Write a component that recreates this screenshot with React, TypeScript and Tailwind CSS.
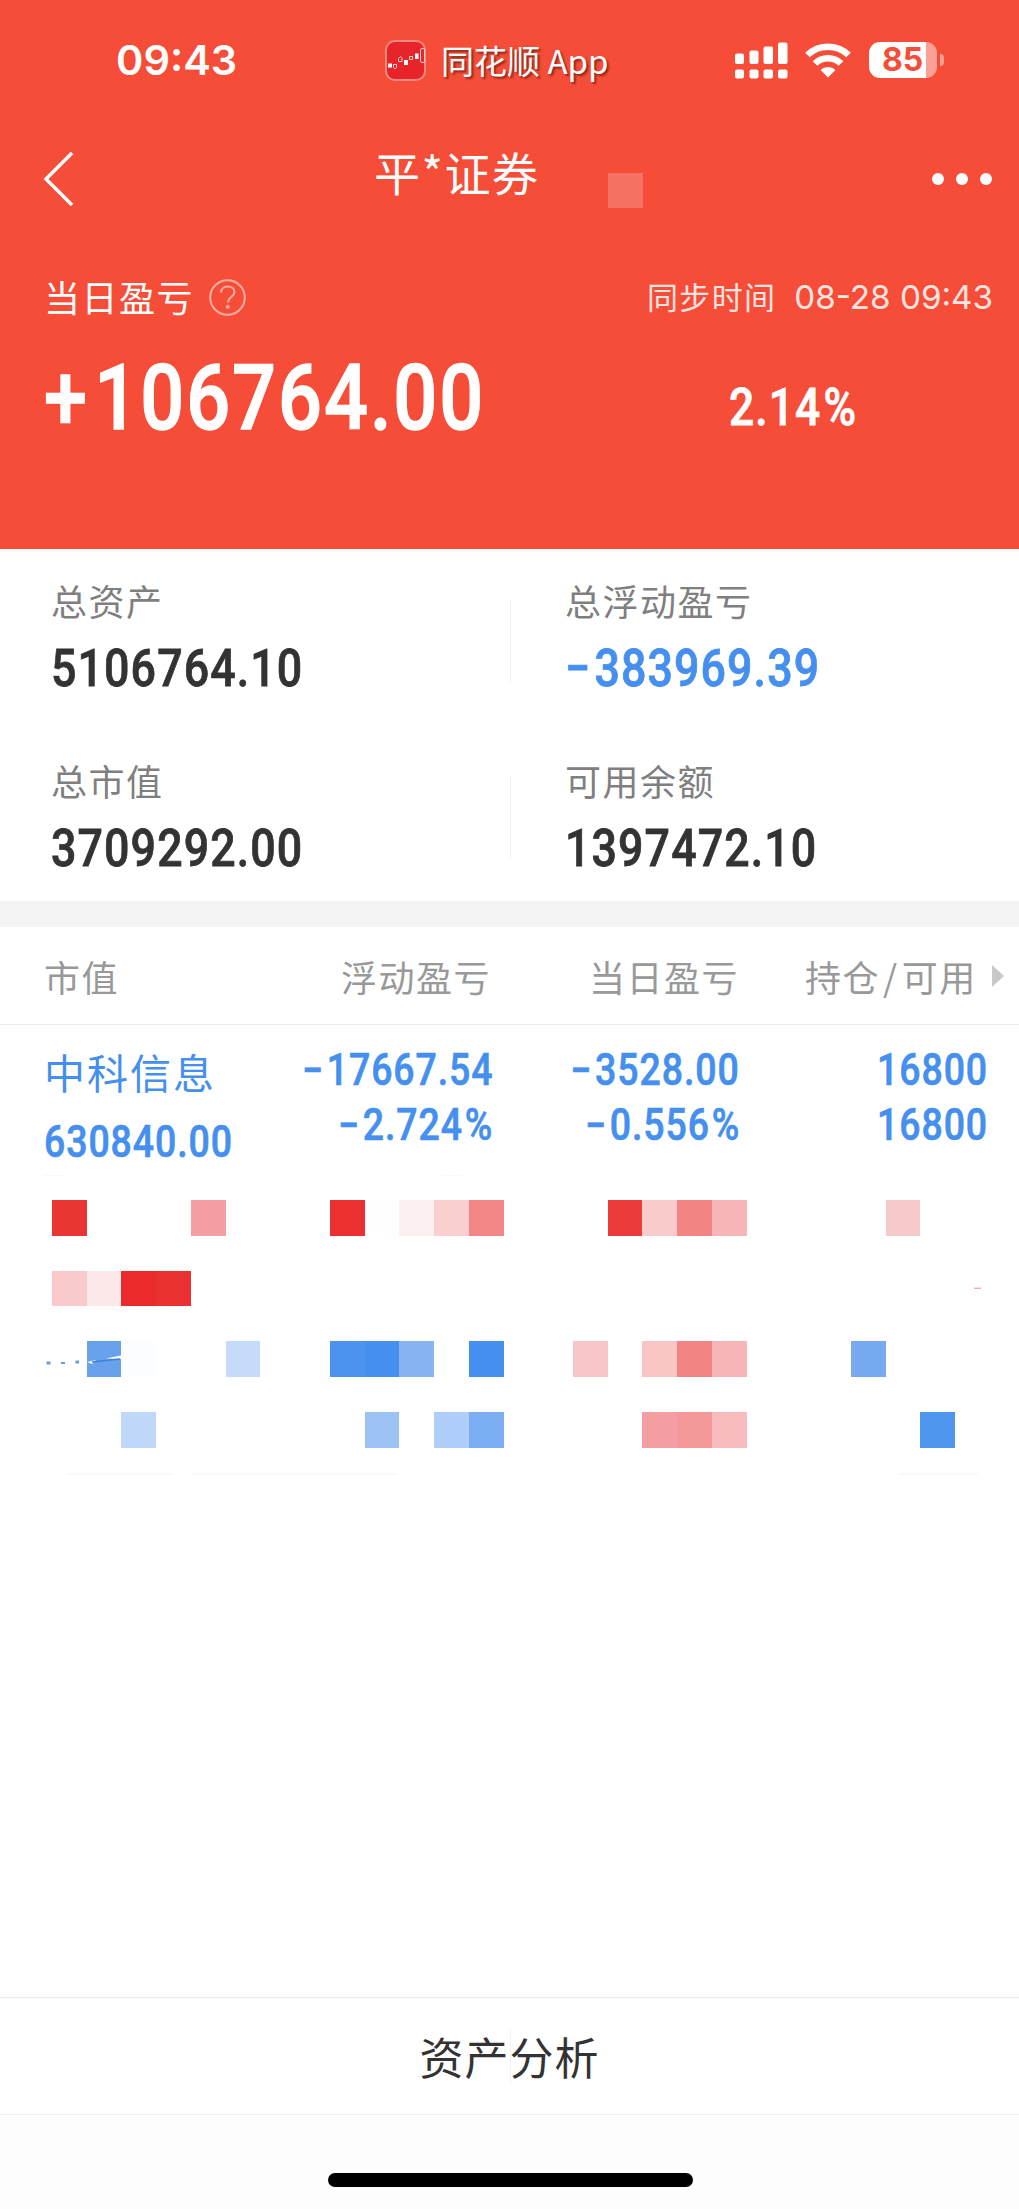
import clsx from "clsx";

const CJK = "font-['Noto_Sans_CJK_SC',sans-serif]";

const summary = [
  { label: "总资产", value: "5106764.10", color: "text-[#333333]" },
  { label: "总浮动盈亏", value: "−383969.39", color: "text-[#458fee]" },
  { label: "总市值", value: "3709292.00", color: "text-[#333333]" },
  { label: "可用余额", value: "1397472.10", color: "text-[#333333]" },
];

// Masked holdings: column index -> tile color
const maskedRows: Record<number, string>[] = [
  {
    0: "bg-[#ea3535]",
    4: "bg-[#f49fa1]",
    8: "bg-[#ea3030]",
    9: "bg-[#fffdfd]",
    10: "bg-[#fcefef]",
    11: "bg-[#f9cfcf]",
    12: "bg-[#f28686]",
    16: "bg-[#ec3b3b]",
    17: "bg-[#f9cbcb]",
    18: "bg-[#f28484]",
    19: "bg-[#f8b5b7]",
    24: "bg-[#f8c9ca]",
  },
  { 0: "bg-[#f9cacb]", 1: "bg-[#fbe8e8]", 2: "bg-[#ea2a2b]", 3: "bg-[#e93131]" },
  {
    1: "bg-[#68a2ec]",
    2: "bg-[#fcfdff]",
    5: "bg-[#c6dafa]",
    8: "bg-[#4d92ee]",
    9: "bg-[#458fee]",
    10: "bg-[#86b5f1]",
    12: "bg-[#458fee]",
    15: "bg-[#f8c6c8]",
    17: "bg-[#f9c5c5]",
    18: "bg-[#f28484]",
    19: "bg-[#f8b5b7]",
    23: "bg-[#77aaf0]",
  },
  {
    2: "bg-[#bfd8f8]",
    9: "bg-[#9bc3f3]",
    11: "bg-[#aecdf8]",
    12: "bg-[#7badf2]",
    17: "bg-[#f49fa1]",
    18: "bg-[#f49899]",
    19: "bg-[#f8bcbe]",
    25: "bg-[#4f96ef]",
  },
];

// Condensed figures; sign and percent get a little extra room
function Num({ children, className }: { children: string; className?: string }) {
  const sign = /^[+−]/.test(children) ? children[0] : "";
  const percent = children.endsWith("%");
  const digits = children.slice(sign.length, percent ? -1 : undefined);

  return (
    <span
      className={clsx(
        "block w-max scale-x-[0.86] font-['Roboto',sans-serif] font-medium tracking-[0.025em] whitespace-nowrap [-webkit-text-stroke:0.015em_currentColor]",
        className
      )}
    >
      {sign && <span className="mr-[0.07em]">{sign}</span>}
      {digits}
      {percent && <span className="ml-[0.05em]">%</span>}
    </span>
  );
}

function StatusBar() {
  return (
    <div className="flex h-[120px] items-center text-white">
      <div className="ml-[116px] w-[269px] shrink-0 font-['Inter',sans-serif] text-[41.5px] leading-[120px] font-semibold">
        09:43
      </div>
      <svg className="h-[41px] w-[41px] shrink-0" viewBox="0 0 41 41">
        <rect x="1" y="1" width="39" height="39" rx="9" fill="#e8242b" stroke="#f98a80" strokeWidth="2" />
        <g fill="#fff">
          <rect x="3" y="23.500" width="4" height="4" />
          <rect x="19" y="20" width="4" height="5" />
          <rect x="30" y="13.500" width="3.500" height="5.500" />
        </g>
        <g fill="none" stroke="#ffd0cc" strokeWidth="1">
          <path d="M8.500 24.500h3v3l-1.500 1.500-1.500-1.500z" />
          <path d="M13.500 21.500v-3l2-2 1.500 2v3z" />
          <path d="M24.500 16.500h3v3h-3z" />
          <rect x="35.500" y="8.500" width="4" height="14" rx="1.500" />
        </g>
      </svg>
      <div
        className={clsx(
          CJK,
          "ml-[15px] w-[294px] shrink-0 text-[33px] leading-[119px] whitespace-nowrap [text-shadow:2px_2px_2px_rgba(90,20,10,0.65)]"
        )}
      >
        同花顺 App
      </div>
      <svg className="h-[37px] w-[53px] shrink-0" viewBox="0 0 53 37" fill="#fff">
        <rect x="0" y="11.500" width="9" height="10.500" rx="2" />
        <rect x="14.500" y="8.500" width="9" height="13.500" rx="2" />
        <rect x="28.500" y="4.500" width="9.500" height="17.500" rx="2" />
        <rect x="43" y="0.500" width="9.500" height="21.500" rx="2" />
        <rect x="0" y="27.500" width="9" height="9" rx="2" />
        <rect x="14.500" y="27.500" width="9" height="9" rx="2" />
        <rect x="28.500" y="27.500" width="9.500" height="9" rx="2" />
        <rect x="43" y="27.500" width="9.500" height="9" rx="2" />
      </svg>
      <svg className="ml-[17px] h-[35px] w-[46px] shrink-0" viewBox="0 0 46 35">
        <g fill="none" stroke="#fff" strokeWidth="6.500">
          <path d="M2.500 12a29.500 29.500 0 0 1 41 0" />
          <path d="M10 20.500a18.500 18.500 0 0 1 26 0" />
        </g>
        <path d="M23 34.500l-7.500-7.500a10.800 10.800 0 0 1 15 0z" fill="#fff" />
      </svg>
      <div className="ml-[18px] flex h-9 w-[68px] shrink-0 rounded-[11px] bg-linear-to-r from-white from-[57px] to-[#faa095] to-[57px]">
        <span className="ml-[13px] font-['Inter',sans-serif] text-[32px] leading-9 font-bold text-[#f54d37]">85</span>
      </div>
      <div className="ml-[2.5px] h-[12px] w-[4px] shrink-0 rounded-r-full bg-[#faa095]" />
    </div>
  );
}

function TitleBar() {
  return (
    <div className="flex h-[118px] text-white">
      <svg className="mt-[31px] ml-[43px] h-[56px] w-[32px] shrink-0" viewBox="0 0 32 56" fill="none">
        <path d="M29 2L3 28l26 26" stroke="#fff" strokeWidth="3.500" />
      </svg>
      <h1 className={clsx(CJK, "ml-[299px] w-[234px] text-[46px] leading-[103px] tracking-[1.5px] whitespace-nowrap")}>
        平*证券
      </h1>
      <div className="mt-[53px] h-[35px] w-[35px] bg-[#f67262]" />
      <div className="mt-[53px] ml-[289px] flex h-3 gap-[12.5px]">
        <span className="h-[11.5px] w-[11.5px] rounded-full bg-white" />
        <span className="h-[11.5px] w-[11.5px] rounded-full bg-white" />
        <span className="h-[11.5px] w-[11.5px] rounded-full bg-white" />
      </div>
    </div>
  );
}

function SummaryCell({ label, value, color }: { label: string; value: string; color: string }) {
  return (
    <div className="h-[179.5px] pt-[29px]">
      <div className={clsx(CJK, "text-[36px] leading-[44px] tracking-[1.5px] text-[#7f7f7f]")}>{label}</div>
      <Num className={clsx("mt-[17px] origin-left text-[52px] leading-[60px]", color)}>{value}</Num>
    </div>
  );
}

function Holding({ top, bottom }: { top: string; bottom: string }) {
  return (
    <div className="flex flex-col items-end pt-[19px]">
      <Num className="origin-right text-[43.5px] leading-[54.500px]">{top}</Num>
      <Num className="origin-right text-[43.5px] leading-[54.500px]">{bottom}</Num>
    </div>
  );
}

export default function App() {
  return (
    <div className="flex h-[2209px] w-[1019px] flex-col overflow-hidden bg-white">
      <header className="h-[549px] shrink-0 bg-[#f54d37]">
        <StatusBar />
        <TitleBar />
        <div className="flex h-[118px] items-center justify-between pr-[26px] pl-[44px] text-white">
          <div className="flex items-center">
            <span className={clsx(CJK, "-mt-[2px] text-[36px] leading-[50px] tracking-[1.5px]")}>当日盈亏</span>
            <svg className="ml-[15px] h-[37px] w-[37px]" viewBox="0 0 37 37" fill="none" stroke="#fbaea3" strokeWidth="2">
              <circle cx="18.500" cy="18.500" r="17.300" />
              <path d="M12 13.500c0-8 13.500-8 13.500-.5 0 4.500-6.500 5-6.500 10.500" />
              <circle cx="18.700" cy="27.800" r="1" fill="#fbaea3" />
            </svg>
          </div>
          <div className="flex items-center text-[#ffe4e0]">
            <span className={clsx(CJK, "-mt-[2px] text-[31px] leading-[50px] tracking-[1.3px]")}>同步时间</span>
            <span className="ml-[18px] font-['Inter',sans-serif] text-[33.200px] leading-[50px]">08-28 09:43</span>
          </div>
        </div>
        <div className="flex pt-[4px] pl-[44px] text-white">
          <div className="w-[685px]">
            <Num className="origin-left text-[90px] leading-[78px]">+106764.00</Num>
          </div>
          <Num className="mt-[18px] origin-left text-[51.500px] leading-[60px]">2.14%</Num>
        </div>
      </header>

      <section className="grid h-[352px] shrink-0 grid-cols-[459px_auto_1fr] pl-[51px]">
        <div>
          <SummaryCell {...summary[0]} />
          <SummaryCell {...summary[2]} />
        </div>
        <div className="w-[2px] pt-[51px]">
          <div className="h-[82px] w-px bg-[#f0f0f0]" />
          <div className="mt-[95px] h-[82px] w-px bg-[#f0f0f0]" />
        </div>
        <div className="pl-[53px]">
          <SummaryCell {...summary[1]} />
          <SummaryCell {...summary[3]} />
        </div>
      </section>

      <div className="h-[26px] shrink-0 bg-[#f4f4f4]" />

      <div
        className={clsx(
          CJK,
          "flex h-[98px] shrink-0 items-center border-b border-[#ebebeb] pl-[44px] text-[36px] leading-[50px] tracking-[1.5px] text-[#999999]"
        )}
      >
        <span className="w-[297px]">市值</span>
        <span className="w-[248px]">浮动盈亏</span>
        <span className="w-[216px]">当日盈亏</span>
        <span className="w-[187px] whitespace-nowrap">
          持仓<span className="mx-[3px]">/</span>可用
        </span>
        <svg className="h-[22px] w-[12px]" viewBox="0 0 12 22">
          <path d="M0 0l12 11L0 22z" fill="#c8c8c8" />
        </svg>
      </div>

      <div className="grid h-[150px] shrink-0 grid-cols-[230px_219px_247px_248px] pl-[44px] text-[#458fee]">
        <div className="pt-[19px]">
          <div className={clsx(CJK, "text-[41px] leading-[54px] tracking-[2px]")}>中科信息</div>
          <Num className="mt-[17.500px] origin-left text-[43.5px] leading-[54px]">630840.00</Num>
        </div>
        <Holding top="−17667.54" bottom="−2.724%" />
        <Holding top="−3528.00" bottom="−0.556%" />
        <Holding top="16800" bottom="16800" />
      </div>

      <div className="relative flex grow flex-col gap-[35.200px] pt-[25px] pl-[52px]">
        {maskedRows.map((tiles, row) => (
          <div key={row} className="grid h-[35.500px] grid-cols-[repeat(26,34.735px)]">
            {Array.from({ length: 26 }).map((_, col) => (
              <div key={col} className={tiles[col]} />
            ))}
          </div>
        ))}
        {/* leftovers of the masked text */}
        <svg className="absolute top-0 left-0 h-[310px] w-[1019px]" viewBox="0 1175 1019 310">
          <g fill="#6a9ee0">
            <rect x="46.500" y="1361.500" width="4" height="3" />
            <rect x="61" y="1362" width="4" height="2" />
            <rect x="75.500" y="1360.500" width="3.500" height="3" />
          </g>
          <path d="M87 1362l9-2-4 4zM106 1358.500l15-3v3.500z" fill="#fff" />
          <path d="M92 1362l14-1.500 14-1.500" stroke="#3b82dd" strokeWidth="1.500" fill="none" />
          <path d="M974 1288.200h7" stroke="#f08a90" strokeWidth="1" />
          <path d="M44 1175h20M442 1175h20M68 1474h104M192 1474h204M898 1474h80" stroke="#f8f8f8" strokeWidth="2" />
        </svg>
      </div>

      <footer className="h-[212px] shrink-0 border-t border-[#ebebeb]">
        <div className="relative flex h-[117px] items-center justify-center border-b border-[#f0f0f0]">
          <span className={clsx(CJK, "text-[44px] leading-[60px] tracking-[1px] text-[#333333]")}>资产分析</span>
          <span className="absolute top-[32px] left-[510px] h-[54px] w-px bg-[#f2f2f2]" />
        </div>
        <div className="h-[94px] bg-[#fdfdfd] pt-[58px]">
          <div className="ml-[328px] h-[14px] w-[365px] rounded-full bg-black" />
        </div>
      </footer>
    </div>
  );
}
